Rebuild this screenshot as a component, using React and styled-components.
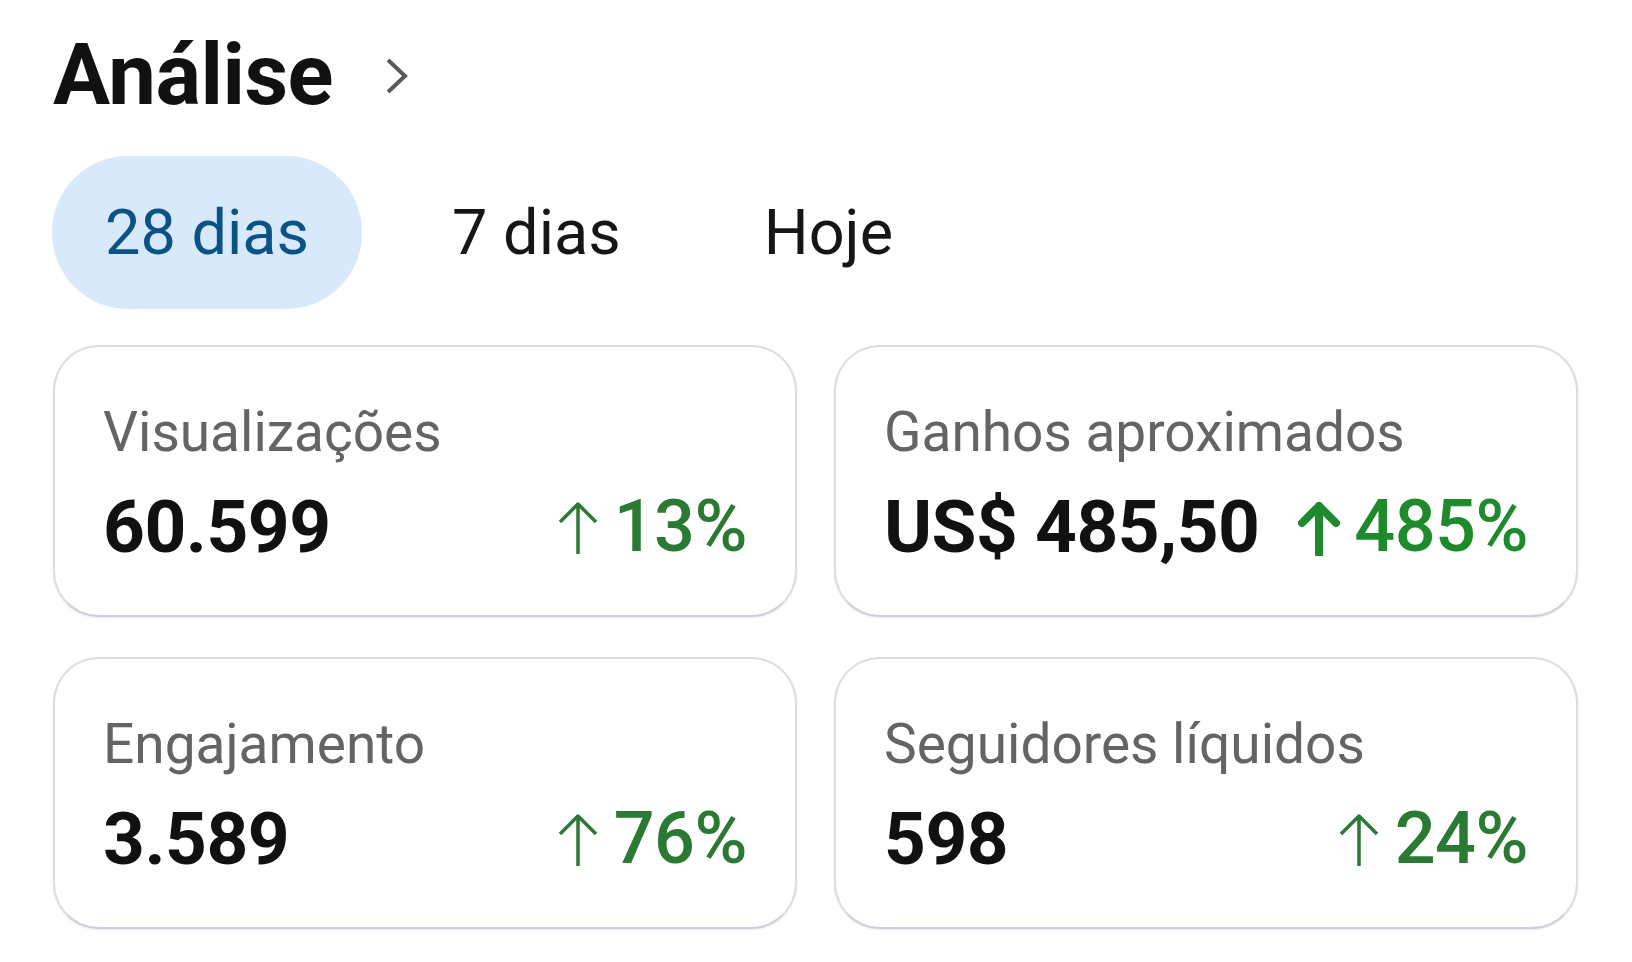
import { createGlobalStyle, styled } from "styled-components";

const GlobalStyle = createGlobalStyle`
    html, body {
        margin: 0;
        padding: 0;
        background: #ffffff;
    }
    body {
        font-family: Roboto, "Noto Sans", "Liberation Sans", sans-serif;
        color: #111111;
    }
`;

const Page = styled.div`
    width: 1632px;
    height: 962px;
    box-sizing: border-box;
    padding: 24px 52px 0 53px;
    overflow: hidden;
`;

const Header = styled.div`
    display: flex;
    align-items: center;
    gap: 51px;
`;

const Title = styled.h1`
    margin: 0;
    font-size: 85px;
    line-height: 102px;
    font-weight: 700;
    color: #111111;
    letter-spacing: -0.5px;
`;

const Chevron = styled.svg`
    width: 26px;
    height: 40px;
    margin-top: 2px;
`;

const Tabs = styled.div`
    display: flex;
    gap: 37px;
    margin-top: 30px;
    margin-left: -1px;
`;

const Tab = styled.button`
    height: 153px;
    padding: 0 53px;
    border: none;
    border-radius: 76px;
    background: ${(p) => (p.$active ? "#d8e9fb" : "transparent")};
    color: ${(p) => (p.$active ? "#0b5286" : "#161616")};
    font-family: inherit;
    font-size: 63px;
    font-weight: 400;
    display: flex;
    align-items: center;
    cursor: pointer;
`;

const Grid = styled.div`
    display: grid;
    grid-template-columns: 744px 744px;
    column-gap: 37px;
    row-gap: 40px;
    margin-top: 36px;
`;

const Card = styled.div`
    box-sizing: border-box;
    height: 272px;
    padding: 52px 48px 48px 48px;
    border: 2px solid #dcdce4;
    border-bottom-color: #cfd0de;
    border-radius: 46px;
    background: #ffffff;
    box-shadow: 0 1px 2px rgba(90, 90, 130, 0.12);
    display: flex;
    flex-direction: column;
    gap: 18px;
`;

const Label = styled.div`
    font-size: 55px;
    line-height: 66px;
    color: #646464;
    white-space: nowrap;
`;

const ValueRow = styled.div`
    display: flex;
    align-items: center;
    justify-content: space-between;
    height: 88px;
`;

const Value = styled.div`
    font-size: 73px;
    line-height: 88px;
    font-weight: 700;
    color: #111111;
    letter-spacing: -0.5px;
    white-space: nowrap;
`;

const Change = styled.div`
    display: flex;
    align-items: center;
    gap: ${(p) => (p.$bold ? "14px" : "15px")};
    color: ${(p) => (p.$bold ? "#1f8a2b" : "#2b7a33")};
`;

const Percent = styled.span`
    font-size: 72px;
    line-height: 88px;
    font-weight: 500;
    letter-spacing: -0.5px;
    white-space: nowrap;
`;

const ArrowIcon = styled.svg`
    width: 42px;
    height: 56px;
    margin-top: 2px;
`;

const UpArrow = ({ bold }) => (
    <ArrowIcon viewBox="0 0 42 56" fill="none">
        <path
            d={bold ? "M21 54V6M4 23L21 6L38 23" : "M21 54V4M3 22L21 4L39 22"}
            stroke="currentColor"
            strokeWidth={bold ? 8 : 3.5}
            strokeLinecap={bold ? "round" : "butt"}
            strokeLinejoin="round"
        />
    </ArrowIcon>
);

const metrics = [
    { label: "Visualizações", value: "60.599", change: "13%" },
    { label: "Ganhos aproximados", value: "US$ 485,50", change: "485%", bold: true },
    { label: "Engajamento", value: "3.589", change: "76%" },
    { label: "Seguidores líquidos", value: "598", change: "24%" },
];

const tabs = ["28 dias", "7 dias", "Hoje"];

const App = () => (
    <Page>
        <GlobalStyle />
        <Header>
            <Title>Análise</Title>
            <Chevron viewBox="0 0 26 40" fill="none">
                <path d="M4 4L21 20L4 36" stroke="#5a5a5a" strokeWidth="4" />
            </Chevron>
        </Header>
        <Tabs>
            {tabs.map((t, i) => (
                <Tab key={t} $active={i === 0}>
                    {t}
                </Tab>
            ))}
        </Tabs>
        <Grid>
            {metrics.map((m) => (
                <Card key={m.label}>
                    <Label>{m.label}</Label>
                    <ValueRow>
                        <Value>{m.value}</Value>
                        <Change $bold={m.bold}>
                            <UpArrow bold={m.bold} />
                            <Percent>{m.change}</Percent>
                        </Change>
                    </ValueRow>
                </Card>
            ))}
        </Grid>
    </Page>
);

export default App;
